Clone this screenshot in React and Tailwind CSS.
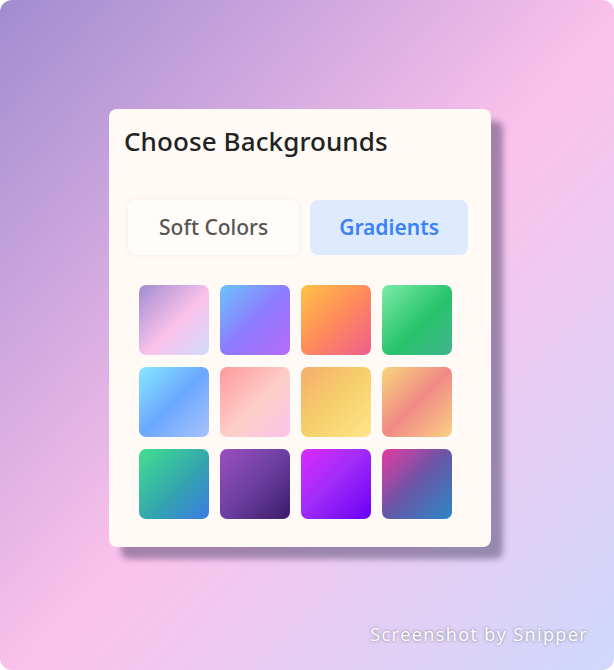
import React, { useState } from "react";

const gradients = [
  "bg-[linear-gradient(135deg,#a18cd1_0%,#fbc2eb_55%,#d0dcfb_100%)]",
  "bg-[linear-gradient(135deg,#6cc4fc_0%,#8d7bfe_50%,#b66bf8_100%)]",
  "bg-[linear-gradient(135deg,#ffc445_0%,#ff8a5b_50%,#ee5e8e_100%)]",
  "bg-[linear-gradient(135deg,#7eeaa8_0%,#27c46b_55%,#40b48e_100%)]",
  "bg-[linear-gradient(135deg,#86e8ff_0%,#6aa8ff_50%,#a9c2fb_100%)]",
  "bg-[linear-gradient(135deg,#ff9a9e_0%,#fdcfc9_55%,#fbc2eb_100%)]",
  "bg-[linear-gradient(135deg,#f5ad6c_0%,#f6cf6b_50%,#fee68a_100%)]",
  "bg-[linear-gradient(135deg,#f7d67c_0%,#f08a85_50%,#fbd084_100%)]",
  "bg-[linear-gradient(135deg,#43e08e_0%,#33a6ad_55%,#3b7be3_100%)]",
  "bg-[linear-gradient(135deg,#9c4fc0_0%,#6c3fa1_50%,#3a1b68_100%)]",
  "bg-[linear-gradient(135deg,#dc2bfb_0%,#a22cf9_45%,#6a00f4_100%)]",
  "bg-[linear-gradient(135deg,#e63aa2_0%,#6657a6_50%,#2b88c7_100%)]",
];

function App() {
  const [tab, setTab] = useState("gradients");

  return (
    <div className="w-[614px] h-[670px] bg-white font-['Noto_Sans',sans-serif]">
      <div className="relative w-full h-full rounded-[12px] bg-[linear-gradient(to_bottom_right,#a18cd1_0%,#fbc2eb_52%,#cfd9fc_100%)] pt-[109px] pl-[109px]">
        <div className="w-[382px] h-[438px] rounded-[8px] bg-[#fffaf6] shadow-[12px_12px_6px_rgba(60,50,90,0.45)] pt-[15px] px-[15px]">
          <h2 className="text-[26px] leading-[34px] font-medium text-[#222] tracking-[0.1px]">
            Choose Backgrounds
          </h2>

          <div className="flex gap-[11px] mt-[42px] ml-[4px]">
            <button
              onClick={() => setTab("soft")}
              className={
                tab === "soft"
                  ? "h-[55px] px-[31px] rounded-[8px] bg-[#deeafd] text-[21px] font-semibold text-[#3b82f6]"
                  : "h-[55px] px-[31px] rounded-[8px] bg-[#fffcfa] shadow-[0_0_6px_rgba(0,0,0,0.06)] text-[21px] font-medium text-[#555]"
              }
            >
              Soft Colors
            </button>
            <button
              onClick={() => setTab("gradients")}
              className={
                tab === "gradients"
                  ? "h-[55px] px-[29px] rounded-[8px] bg-[#deeafd] text-[21px] font-semibold text-[#3b82f6]"
                  : "h-[55px] px-[29px] rounded-[8px] bg-[#fffcfa] shadow-[0_0_6px_rgba(0,0,0,0.06)] text-[21px] font-medium text-[#555]"
              }
            >
              Gradients
            </button>
          </div>

          <div className="grid grid-cols-[repeat(4,70px)] gap-x-[11px] gap-y-[12px] mt-[30px] ml-[15px]">
            {gradients.map((g, i) => (
              <div
                key={i}
                className={`w-[70px] h-[70px] rounded-[7px] shadow-[0_0_2px_rgba(255,255,255,0.8)] ${g}`}
              />
            ))}
          </div>
        </div>

        <div className="absolute right-[26px] bottom-[22px] text-[18px] text-white tracking-[1.4px] [text-shadow:0_0_3px_rgba(80,80,80,0.7)] font-['Open_Sans',sans-serif]">
          Screenshot by Snipper
        </div>
      </div>
    </div>
  );
}

export default App;
